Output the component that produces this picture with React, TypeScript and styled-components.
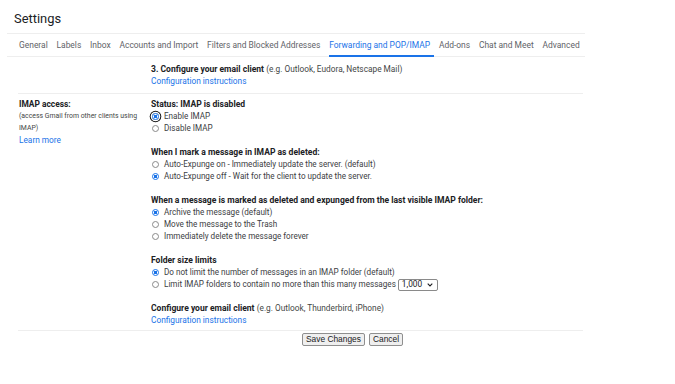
import styled, { createGlobalStyle } from "styled-components";

const GlobalStyle = createGlobalStyle`
  body {
    margin: 0;
    background: #fff;
    font-family: Roboto, "Liberation Sans", Arial, sans-serif;
    color: #202124;
  }
`;

const Page = styled.div`
  width: 675px;
  height: 384px;
  overflow: hidden;
`;

const Title = styled.h1`
  margin: 0;
  padding: 9px 0 0 14px;
  height: 24px;
  font-size: 12.9px;
  line-height: 20px;
  font-weight: 400;
  color: #202124;
`;

const TabBar = styled.nav`
  display: flex;
  gap: 8.8px;
  margin-left: 7px;
  width: 578px;
  padding-left: 12px;
  box-sizing: border-box;
  height: 24px;
  border-top: 1px solid #eeeeee;
  border-bottom: 1px solid #eeeeee;
`;

const Tab = styled.div<{ $active?: boolean }>`
  display: flex;
  align-items: center;
  font-size: 8.45px;
  white-space: nowrap;
  color: ${({ $active }) => ($active ? "#1a73e8" : "#5f6368")};
  border-bottom: 2px solid ${({ $active }) => ($active ? "#1a73e8" : "transparent")};
  margin-bottom: -1px;
  padding: ${({ $active }) => ($active ? "0 4px 0 0" : "0")};
  margin-right: ${({ $active }) => ($active ? "-4px" : "0")};
`;

const Content = styled.div`
  margin-left: 18px;
  width: 565px;
`;

const Row = styled.div<{ $top?: number; $bottom?: number }>`
  display: grid;
  grid-template-columns: 133px 1fr;
  padding: ${({ $top }) => $top ?? 6}px 0 ${({ $bottom }) => $bottom ?? 6}px;
  border-bottom: 1px solid #eeeeee;
  line-height: 11.9px;
  font-size: 8.15px;
`;

const Side = styled.div`
  padding-left: 1px;
`;

const SideLabel = styled.div`
  font-weight: 700;
  font-size: 8.4px;
`;

const SideNote = styled.div`
  font-size: 6.9px;
  color: #444746;
`;

const Main = styled.div``;

const Section = styled.div`
  & + & {
    margin-top: 12.4px;
  }
`;

const Heading = styled.div`
  font-weight: 700;
  font-size: 8.55px;
  color: #202124;
`;

const Hint = styled.span`
  font-weight: 400;
  font-size: 8.3px;
  color: #444746;
`;

const Link = styled.div`
  color: #1a73e8;
  font-size: 8.3px;
`;

const Option = styled.label`
  display: flex;
  align-items: center;
  gap: 4px;
  padding-left: 1px;
  color: #3c4043;
  white-space: nowrap;
`;

const Radio = styled.span<{ $checked?: boolean; $focused?: boolean }>`
  position: relative;
  width: 7px;
  height: 7px;
  border-radius: 50%;
  box-sizing: border-box;
  border: 1px solid ${({ $checked }) => ($checked ? "#1a73e8" : "#8a8a8a")};
  background: ${({ $checked }) =>
    $checked ? "radial-gradient(circle, #1a73e8 0 1.6px, #fff 1.9px)" : "#fff"};
  box-shadow: ${({ $focused }) => ($focused ? "0 0 0 1.3px #fff, 0 0 0 2.3px #101010" : "none")};
  margin-right: 1px;
  flex: none;
`;

const Select = styled.span`
  display: inline-flex;
  align-items: center;
  justify-content: space-between;
  margin-left: -2px;
  width: 40px;
  height: 12px;
  padding: 0 4px 0 3px;
  box-sizing: border-box;
  border: 1px solid #8a8a8a;
  border-radius: 2px;
  color: #202124;
  font-size: 8.3px;
`;

const Footer = styled.div`
  display: flex;
  gap: 4px;
  padding-top: 2px;
  padding-left: 284px;
`;

const Button = styled.button`
  height: 13px;
  padding: 0 3px;
  font-family: "Liberation Sans", Arial, sans-serif;
  font-size: 8.4px;
  line-height: 11px;
  color: #202124;
  background: #efefef;
  border: 1px solid #8f8f8f;
  border-radius: 2px;
`;

const tabs = [
  "General",
  "Labels",
  "Inbox",
  "Accounts and Import",
  "Filters and Blocked Addresses",
  "Forwarding and POP/IMAP",
  "Add-ons",
  "Chat and Meet",
  "Advanced",
];

const Chevron = () => (
  <svg width="6" height="4" viewBox="0 0 6 4">
    <path d="M0.7 0.7 L3 3 L5.3 0.7" fill="none" stroke="#202124" strokeWidth="1.1" />
  </svg>
);

const App = () => (
  <Page>
    <GlobalStyle />
    <Title>Settings</Title>
    <TabBar>
      {tabs.map((t) => (
        <Tab key={t} $active={t === "Forwarding and POP/IMAP"}>
          {t}
        </Tab>
      ))}
    </TabBar>
    <Content>
      <Row $top={7} $bottom={5}>
        <Side />
        <Main>
          <Heading>
            3. Configure your email client <Hint>(e.g. Outlook, Eudora, Netscape Mail)</Hint>
          </Heading>
          <Link>Configuration instructions</Link>
        </Main>
      </Row>
      <Row $top={5} $bottom={3}>
        <Side>
          <SideLabel>IMAP access:</SideLabel>
          <SideNote>(access Gmail from other clients using</SideNote>
          <SideNote>IMAP)</SideNote>
          <Link>Learn more</Link>
        </Side>
        <Main>
          <Section>
            <Heading>Status: IMAP is disabled</Heading>
            <Option>
              <Radio $checked $focused />
              Enable IMAP
            </Option>
            <Option>
              <Radio />
              Disable IMAP
            </Option>
          </Section>
          <Section>
            <Heading>When I mark a message in IMAP as deleted:</Heading>
            <Option>
              <Radio />
              Auto-Expunge on - Immediately update the server. (default)
            </Option>
            <Option>
              <Radio $checked />
              Auto-Expunge off - Wait for the client to update the server.
            </Option>
          </Section>
          <Section>
            <Heading>
              When a message is marked as deleted and expunged from the last visible IMAP folder:
            </Heading>
            <Option>
              <Radio $checked />
              Archive the message (default)
            </Option>
            <Option>
              <Radio />
              Move the message to the Trash
            </Option>
            <Option>
              <Radio />
              Immediately delete the message forever
            </Option>
          </Section>
          <Section>
            <Heading>Folder size limits</Heading>
            <Option>
              <Radio $checked />
              Do not limit the number of messages in an IMAP folder (default)
            </Option>
            <Option>
              <Radio />
              Limit IMAP folders to contain no more than this many messages
              <Select>
                1,000
                <Chevron />
              </Select>
            </Option>
          </Section>
          <Section>
            <Heading>
              Configure your email client <Hint>(e.g. Outlook, Thunderbird, iPhone)</Hint>
            </Heading>
            <Link>Configuration instructions</Link>
          </Section>
        </Main>
      </Row>
      <Footer>
        <Button>Save Changes</Button>
        <Button>Cancel</Button>
      </Footer>
    </Content>
  </Page>
);

export default App;
